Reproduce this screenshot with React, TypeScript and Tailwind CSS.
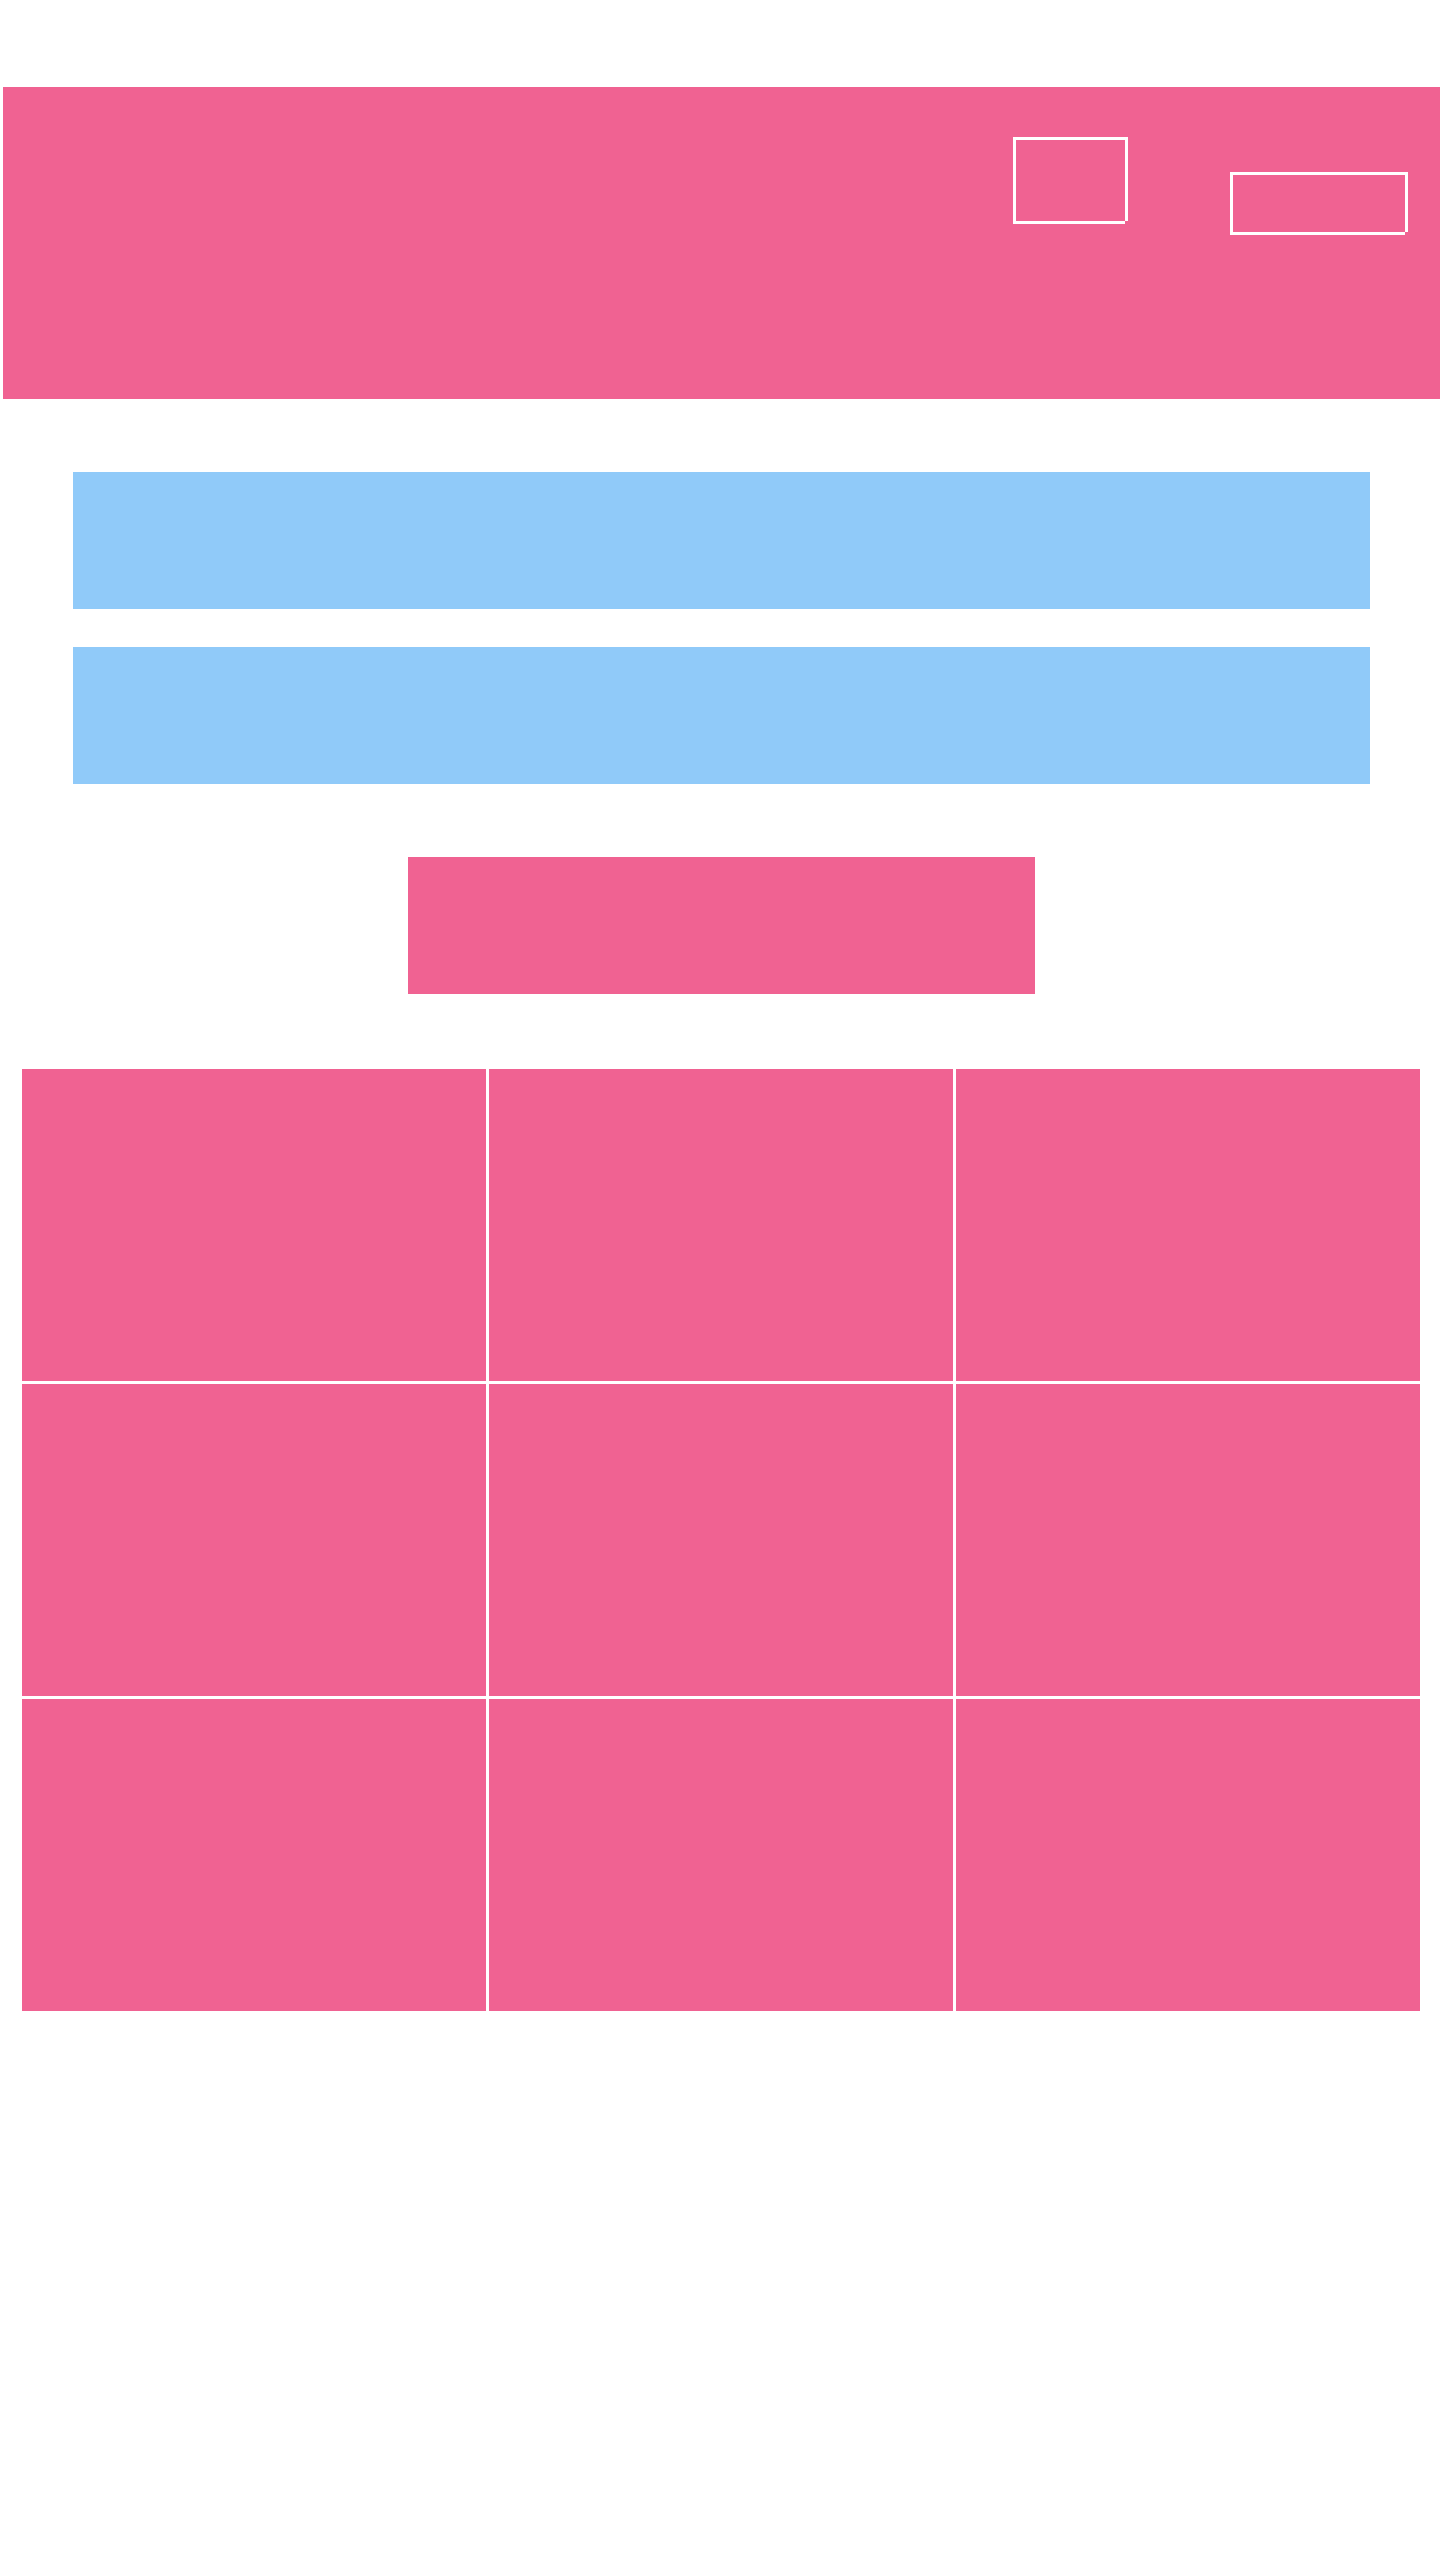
type FrameProps = { className: string };

// White outline whose bottom-right corner is left open.
function Frame({ className }: FrameProps) {
  return (
    <div className={`relative border-3 border-white ${className}`}>
      <span className="absolute -right-[3px] -bottom-[3px] size-[3px] bg-[#f06292]" />
    </div>
  );
}

const tiles = Array.from({ length: 9 }, (_, i) => i);

export default function App() {
  return (
    <div className="min-h-screen bg-white pt-[87px] pl-[3px]">
      <header className="flex h-[312px] items-start justify-end gap-[102px] bg-[#f06292] pr-8">
        <Frame className="mt-[50px] h-[87px] w-[115px]" />
        <Frame className="mt-[85px] h-[63px] w-[178px]" />
      </header>

      <main>
        <section className="mx-[70px] mt-[73px] flex flex-col gap-[38px]">
          <div className="h-[137px] bg-[#90caf9]" />
          <div className="h-[137px] bg-[#90caf9]" />
        </section>

        <section className="mx-auto mt-[73px] h-[137px] w-full max-w-[627px] bg-[#f06292]" />

        <section className="mt-[75px] mr-5 ml-[19px] grid grid-cols-3 gap-[3px]">
          {tiles.map((tile) => (
            <div key={tile} className="h-[312px] bg-[#f06292]" />
          ))}
        </section>
      </main>
    </div>
  );
}
